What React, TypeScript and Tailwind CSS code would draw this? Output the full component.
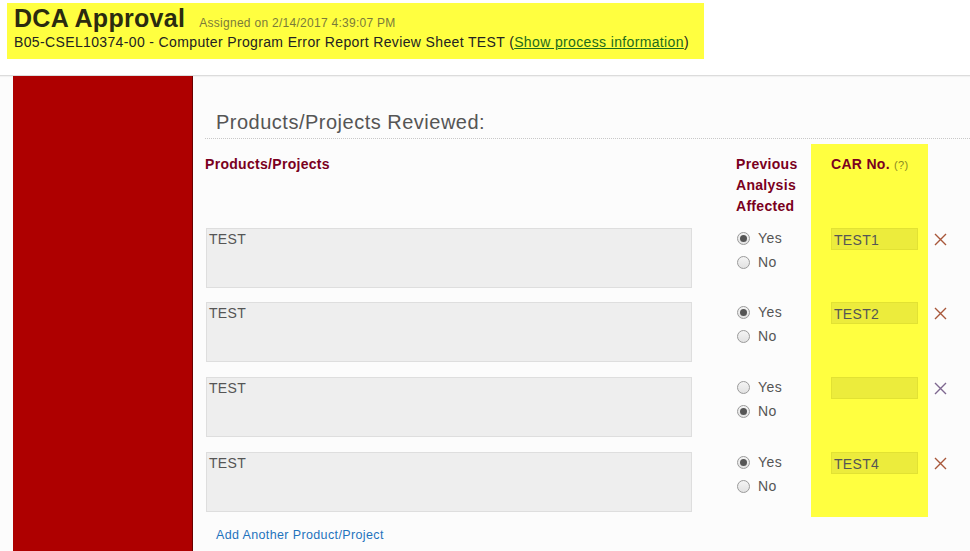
import React from 'react';

type Row = { product: string; affected: 'yes' | 'no'; car: string; xColor: string };

const ROWS: Row[] = [
  { product: 'TEST', affected: 'yes', car: 'TEST1', xColor: '#a8573a' },
  { product: 'TEST', affected: 'yes', car: 'TEST2', xColor: '#a8573a' },
  { product: 'TEST', affected: 'no', car: '', xColor: '#7e6790' },
  { product: 'TEST', affected: 'yes', car: 'TEST4', xColor: '#a8573a' },
];

function Radio({ checked, label }: { checked: boolean; label: string }) {
  return (
    <div className="flex h-5 items-center">
      <span className="grid h-[13px] w-[13px] place-items-center rounded-full border border-[#9a9a9a] bg-gradient-to-b from-[#f4f4f4] to-[#e2e2e2]">
        {checked && <span className="h-[7px] w-[7px] rounded-full bg-[#555]" />}
      </span>
      <span className="ml-[8px] text-[14px] tracking-[0.4px] text-[#555]">{label}</span>
    </div>
  );
}

function RemoveIcon({ color }: { color: string }) {
  return (
    <svg width="13" height="13" viewBox="0 0 13 13" fill="none">
      <path d="M1 1L12 12M12 1L1 12" stroke={color} strokeWidth="1.4" />
    </svg>
  );
}

export default function App() {
  return (
    <div className="flex h-[551px] w-[970px] flex-col overflow-hidden bg-[#fcfcfc] font-['Liberation_Sans',Arial,sans-serif]">
      {/* Header */}
      <div className="h-[76px] shrink-0 border-b border-[#dcdcdc] bg-white pl-[7px] pt-[3px] shadow-[0_1px_1px_rgba(0,0,0,0.04)]">
        <div className="h-[56px] w-[697px] bg-[#ffff40] px-[7px] pt-[1px]">
          <div className="flex items-baseline">
            <span className="text-[25px] font-bold leading-[28px] tracking-[0.3px] text-[#2b2b10]">DCA Approval</span>
            <span className="ml-[14px] text-[12px] tracking-[0.28px] text-[#7a7a3a]">
              Assigned on 2/14/2017 4:39:07 PM
            </span>
          </div>
          <div className="text-[14px] leading-[20px] tracking-[0.36px] text-[#222]">
            B05-CSEL10374-00 - Computer Program Error Report Review Sheet TEST (
            <a className="text-[#1c6b1c] underline">Show process information</a>)
          </div>
        </div>
      </div>

      <div className="flex min-h-0 flex-1">
        <div className="ml-[13px] w-[180px] shrink-0 border-r border-[#6a0000] bg-[#ae0000]" />

        <div className="flex-1 pl-[12px]">
          <div className="border-b border-dotted border-[#c8c8c8] pb-[2px] pl-[11px] pt-[32px] text-[20px] leading-[28px] tracking-[0.5px] text-[#555]">
            Products/Projects Reviewed:
          </div>

          <div className="mt-[5px] text-[14px] tracking-[0.3px]">
            {/* Column headers */}
            <div className="flex">
              <div className="w-[531px] pt-[10px] font-bold leading-[21px] text-[#7a0020]">Products/Projects</div>
              <div className="w-[75px] pt-[10px] font-bold leading-[21px] text-[#7a0020]">
                Previous Analysis Affected
              </div>
              <div className="h-[84px] w-[117px] bg-[#ffff40] pl-[20px] pt-[10px] leading-[21px]">
                <span className="font-bold text-[#7a0020]">CAR No.</span>{' '}
                <span className="text-[11px] text-[#8a8a20]">(?)</span>
              </div>
            </div>

            {ROWS.map((r, i) => {
              const pb = i === ROWS.length - 1 ? 'pb-[5px]' : i === 0 ? 'pb-[14px]' : 'pb-[15px]';
              return (
                <div key={i} className="flex">
                  <div className={`w-[531px] pl-[1px] ${pb}`}>
                    <div className="h-[60px] w-[486px] border border-[#dedede] bg-[#eeeeee] px-[2px] pt-[1px] leading-[18px] text-[#555]">
                      {r.product}
                    </div>
                  </div>
                  <div className={`flex w-[75px] flex-col gap-1 pl-[1px] ${pb}`}>
                    <Radio checked={r.affected === 'yes'} label="Yes" />
                    <Radio checked={r.affected === 'no'} label="No" />
                  </div>
                  <div className={`w-[117px] bg-[#ffff40] pl-[20px] ${pb}`}>
                    <div className="h-[22px] w-[87px] border border-[#e2e233] bg-[#ecec3c] px-[2px] leading-[22px] text-[#555]">
                      {r.car}
                    </div>
                  </div>
                  <div className="flex h-[22px] items-center pl-[6px]">
                    <RemoveIcon color={r.xColor} />
                  </div>
                </div>
              );
            })}
          </div>

          <div className="mt-[9px] pl-[11px] text-[12.5px] tracking-[0.37px] text-[#1f73bd]">
            Add Another Product/Project
          </div>
        </div>
      </div>
    </div>
  );
}
